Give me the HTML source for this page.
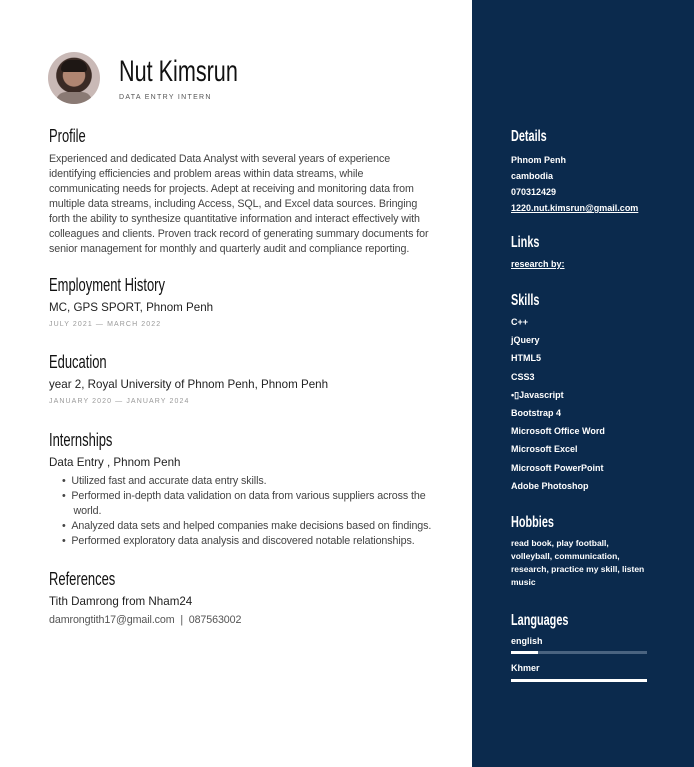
<!DOCTYPE html>
<html><head><meta charset="utf-8"><style>
*{margin:0;padding:0}
body{width:694px;height:767px;position:relative;background:#fff;font-family:"Liberation Sans",sans-serif;overflow:hidden}
.a{position:absolute;white-space:nowrap}
.h{position:absolute;white-space:nowrap;font-family:"Liberation Sans",sans-serif;transform:scaleX(.72);transform-origin:0 0;color:#111;font-size:18px}
.p{font-size:10.7px;color:#444;letter-spacing:-.1px}
.d{font-size:7px;color:#999;letter-spacing:1.1px}
.s{font-size:11.6px;color:#222}
#r{position:absolute;left:472px;top:0;width:222px;height:767px;background:#0b2a4d}
.rh{position:absolute;white-space:nowrap;color:#fff;font-weight:bold;font-size:16px;transform:scaleX(.68);transform-origin:0 0}
.rt{position:absolute;white-space:nowrap;color:#fff;font-weight:bold;font-size:9px}
.u{text-decoration:underline}
</style></head><body>
<div class="a" style="left:48px;top:52px;width:52px;height:52px;border-radius:50%;background:radial-gradient(circle at 50% 45%,#b08672 0 28%,#3a2a24 30% 45%,#c9b9b6 47%);overflow:hidden"><div style="position:absolute;left:13px;top:8px;width:26px;height:12px;background:#1e1714;border-radius:12px 12px 4px 4px"></div><div style="position:absolute;left:8px;top:40px;width:36px;height:14px;background:#8a7a74;border-radius:10px 10px 0 0"></div></div>
<div class="h" style="left:119px;top:55px;font-size:30px">Nut Kimsrun</div>
<div class="a" style="left:119px;top:94px;font-size:7px;color:#555;letter-spacing:1.3px">DATA ENTRY INTERN</div>

<div class="h" style="left:49px;top:126px">Profile</div>
<div class="a p" style="left:49px;top:152px;line-height:15px">Experienced and dedicated Data Analyst with several years of experience<br>identifying efficiencies and problem areas within data streams, while<br>communicating needs for projects. Adept at receiving and monitoring data from<br>multiple data streams, including Access, SQL, and Excel data sources. Bringing<br>forth the ability to synthesize quantitative information and interact effectively with<br>colleagues and clients. Proven track record of generating summary documents for<br>senior management for monthly and quarterly audit and compliance reporting.</div>

<div class="h" style="left:49px;top:275px">Employment History</div>
<div class="a s" style="left:49px;top:301px">MC, GPS SPORT, Phnom Penh</div>
<div class="a d" style="left:49px;top:321px">JULY 2021 — MARCH 2022</div>

<div class="h" style="left:49px;top:352px">Education</div>
<div class="a s" style="left:49px;top:378px">year 2, Royal University of Phnom Penh, Phnom Penh</div>
<div class="a d" style="left:49px;top:398px">JANUARY 2020 — JANUARY 2024</div>

<div class="h" style="left:49px;top:430px">Internships</div>
<div class="a s" style="left:49px;top:456px">Data Entry , Phnom Penh</div>
<div class="a p" style="left:62px;top:474px;line-height:15px">•&nbsp;&nbsp;Utilized fast and accurate data entry skills.<br>•&nbsp;&nbsp;Performed in-depth data validation on data from various suppliers across the<br>&nbsp;&nbsp;&nbsp;&nbsp;world.<br>•&nbsp;&nbsp;Analyzed data sets and helped companies make decisions based on findings.<br>•&nbsp;&nbsp;Performed exploratory data analysis and discovered notable relationships.</div>

<div class="h" style="left:49px;top:569px">References</div>
<div class="a s" style="left:49px;top:595px">Tith Damrong from Nham24</div>
<div class="a p" style="left:49px;top:614px;color:#555">damrongtith17@gmail.com &nbsp;| &nbsp;087563002</div>

<div id="r"></div>
<div class="rh" style="left:511px;top:128px">Details</div>
<div class="rt" style="left:511px;top:152px;line-height:16px">Phnom Penh<br>cambodia<br>070312429<br><span class="u">1220.nut.kimsrun@gmail.com</span></div>
<div class="rh" style="left:511px;top:234px">Links</div>
<div class="rt u" style="left:511px;top:259px">research by:</div>
<div class="rh" style="left:511px;top:292px">Skills</div>
<div class="rt" style="left:511px;top:313px;line-height:18.2px">C++<br>jQuery<br>HTML5<br>CSS3<br>•▯Javascript<br>Bootstrap 4<br>Microsoft Office Word<br>Microsoft Excel<br>Microsoft PowerPoint<br>Adobe Photoshop</div>
<div class="rh" style="left:511px;top:514px">Hobbies</div>
<div class="rt" style="left:511px;top:537px;line-height:13px;font-size:8.5px">read book, play football,<br>volleyball, communication,<br>research, practice my skill, listen<br>music</div>
<div class="rh" style="left:511px;top:612px">Languages</div>
<div class="rt" style="left:511px;top:636px">english</div>
<div class="a" style="left:511px;top:651px;width:136px;height:3px;background:#4a6380"></div>
<div class="a" style="left:511px;top:651px;width:27px;height:3px;background:#fff"></div>
<div class="rt" style="left:511px;top:663px">Khmer</div>
<div class="a" style="left:511px;top:679px;width:136px;height:3px;background:#fff"></div>
</body></html>
